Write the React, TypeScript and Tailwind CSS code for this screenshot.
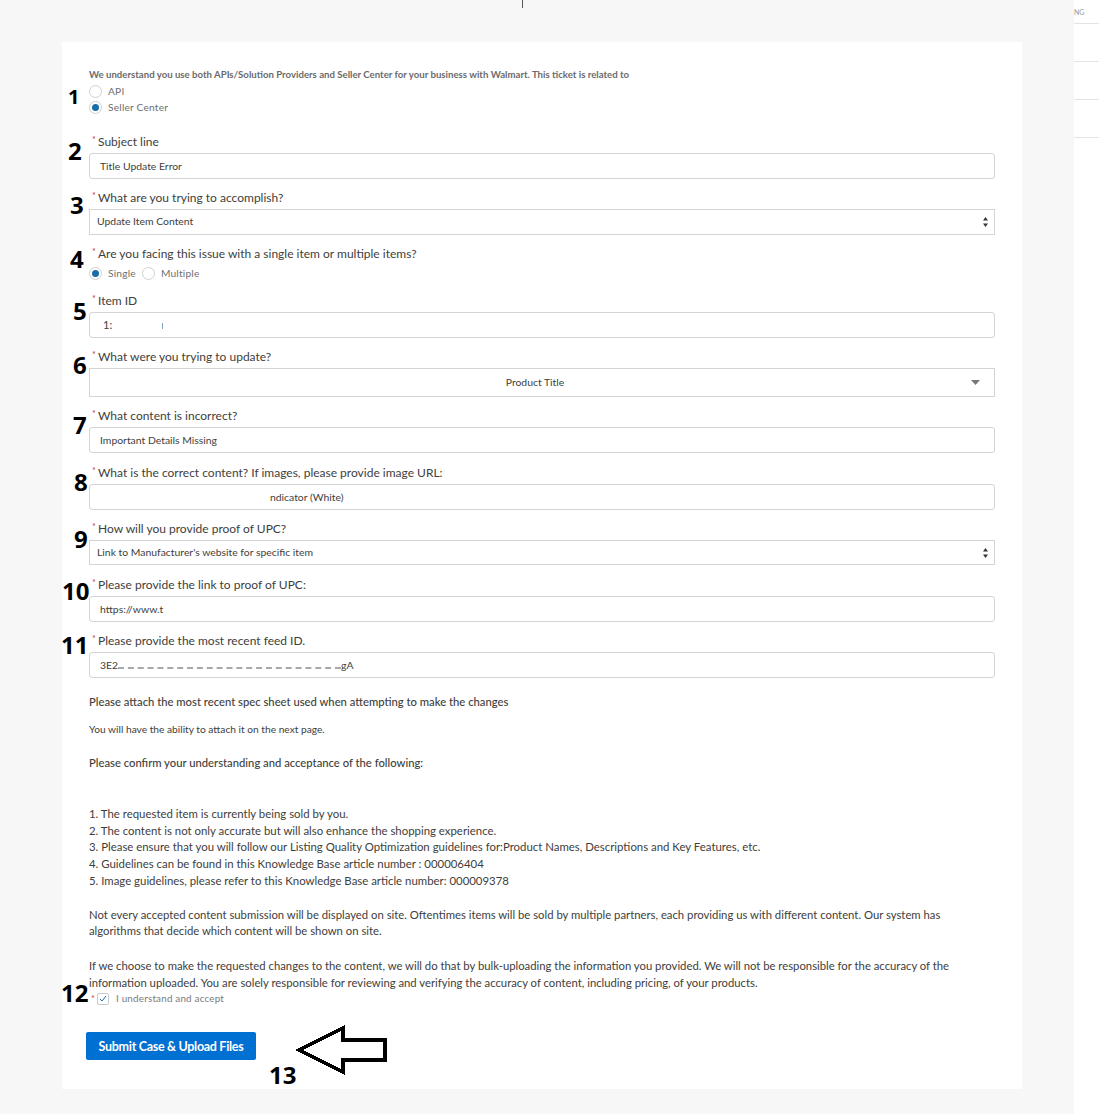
import type { ReactNode } from 'react'

function Label({ children }: { children: ReactNode }) {
  return (
    <div className="h-5 mb-px pl-[3px] flex items-center text-[12px] text-[#3e3e3c]">
      <span className="w-[6px] self-start mt-[2px] text-[9px] leading-[12px] text-[#c23934]">*</span>
      <span>{children}</span>
    </div>
  )
}

function TextBox({ children }: { children: ReactNode }) {
  return (
    <div className="h-[26px] pl-[10px] pt-px flex items-center rounded-[3px] border border-[#d4d4d4] bg-white text-[10.4px] text-[#3e3e3c]">
      {children}
    </div>
  )
}

function SelectBox({ children, className }: { children: ReactNode; className?: string }) {
  return (
    <div className={`h-[26px] pl-[7px] pr-[6px] flex items-center justify-between border border-[#d4d4d4] bg-white text-[10.4px] text-[#3e3e3c] ${className ?? ''}`}>
      <span>{children}</span>
      <svg width="5" height="12" viewBox="0 0 5 12">
        <path d="M2.5 1 L5 4.5 H0 Z" fill="#333" />
        <path d="M2.5 11 L5 7.5 H0 Z" fill="#333" />
      </svg>
    </div>
  )
}

function Radio({ checked, label }: { checked?: boolean; label: string }) {
  return (
    <div className="flex items-center gap-[6px]">
      <span className="w-[13px] h-[13px] rounded-full border border-[#d0d0d0] bg-white flex items-center justify-center">
        {checked && <span className="w-[7px] h-[7px] rounded-full bg-[#1b6ea8]" />}
      </span>
      <span className="text-[10.2px] text-[#6f6f6f] tracking-[0.2px]">{label}</span>
    </div>
  )
}

export default function App() {
  return (
    <div className="flex min-h-[1114px] font-['Lato',sans-serif]">
      <main className="relative w-[1074px] bg-[#f7f7f7] pt-[42px] pb-[25px]">
        <div className="absolute left-[522px] top-0 w-px h-2 bg-[#555]" />

        <div className="relative ml-[62px] w-[960px] bg-white px-[27px] pt-6 pb-[29px]">
          <p className="h-4 leading-4 text-[9.65px] font-bold text-[#6b6b6b]">
            We understand you use both APIs/Solution Providers and Seller Center for your business with Walmart. This ticket is related to
          </p>
          <div className="mt-[2px] flex flex-col">
            <div className="h-4 flex items-center"><Radio label="API" /></div>
            <div className="h-4 flex items-center"><Radio checked label="Seller Center" /></div>
          </div>

          <div className="mt-4 flex flex-col gap-[9px]">
            <div>
              <Label>Subject line</Label>
              <TextBox>Title Update Error</TextBox>
            </div>
            <div>
              <Label>What are you trying to accomplish?</Label>
              <SelectBox>Update Item Content</SelectBox>
            </div>
            <div>
              <Label>Are you facing this issue with a single item or multiple items?</Label>
              <div className="h-[17px] pt-px flex items-center gap-[6px]">
                <Radio checked label="Single" />
                <Radio label="Multiple" />
              </div>
            </div>
            <div>
              <Label>Item ID</Label>
              <TextBox>
                <span className="ml-[3px] w-[59px] text-[11px]">1:</span>
                <span className="w-px h-[6px] bg-[#7f9fc0]" />
              </TextBox>
            </div>
            <div>
              <Label>What were you trying to update?</Label>
              <div className="relative h-[29px] pt-px pr-[14px] flex items-center justify-center border border-[#d4d4d4] bg-white text-[10.4px] text-[#3e3e3c]">
                <span>Product Title</span>
                <svg width="9" height="5" viewBox="0 0 9 5" className="absolute right-[14px] top-[11px]">
                  <path d="M0 0 H9 L4.5 5 Z" fill="#777" />
                </svg>
              </div>
            </div>
            <div>
              <Label>What content is incorrect?</Label>
              <TextBox>Important Details Missing</TextBox>
            </div>
            <div className="mt-px">
              <Label>What is the correct content? If images, please provide image URL:</Label>
              <TextBox><span className="ml-[170px]">ndicator (White)</span></TextBox>
            </div>
            <div>
              <Label>How will you provide proof of UPC?</Label>
              <SelectBox className="!h-[25px]">Link to Manufacturer's website for specific item</SelectBox>
            </div>
            <div className="mt-px">
              <Label>Please provide the link to proof of UPC:</Label>
              <TextBox>https://www.t</TextBox>
            </div>
            <div>
              <Label>Please provide the most recent feed ID.</Label>
              <TextBox>
                <span>3E2</span>
                <span className="w-[223px] mt-[5px] border-b-2 border-dashed border-[#a8a8a8]" />
                <span>gA</span>
              </TextBox>
            </div>
          </div>

          <p className="mt-4 h-4 leading-4 text-[11.25px] font-medium text-[#3e3e3c]">
            Please attach the most recent spec sheet used when attempting to make the changes
          </p>
          <p className="mt-[11px] h-4 leading-4 text-[10.2px] text-[#3e3e3c]">You will have the ability to attach it on the next page.</p>
          <p className="mt-[18px] h-4 leading-4 text-[11.25px] font-medium text-[#3e3e3c]">Please confirm your understanding and acceptance of the following:</p>

          <ol className="mt-[35px] text-[11.4px] leading-[16.7px] text-[#3e3e3c]">
            <li>1. The requested item is currently being sold by you.</li>
            <li>2. The content is not only accurate but will also enhance the shopping experience.</li>
            <li>3. Please ensure that you will follow our Listing Quality Optimization guidelines for:Product Names, Descriptions and Key Features, etc.</li>
            <li>4. Guidelines can be found in this Knowledge Base article number : 000006404</li>
            <li>5. Image guidelines, please refer to this Knowledge Base article number: 000009378</li>
          </ol>

          <p className="mt-[17px] text-[11.3px] leading-[16.5px] text-[#3e3e3c]">
            Not every accepted content submission will be displayed on site. Oftentimes items will be sold by multiple partners, each providing us with different content. Our system has algorithms that decide which content will be shown on site.
          </p>
          <p className="mt-[17px] text-[11.3px] leading-[17px] text-[#3e3e3c]">
            If we choose to make the requested changes to the content, we will do that by bulk-uploading the information you provided. We will not be responsible for the accuracy of the information uploaded. You are solely responsible for reviewing and verifying the accuracy of content, including pricing, of your products.
          </p>

          <div className="h-4 pl-[2px] flex items-center">
            <span className="w-[6px] text-[9px] leading-[12px] text-[#c23934]">*</span>
            <span className="w-3 h-3 rounded-[2px] border border-[#c9c9c9] bg-white flex items-center justify-center">
              <svg width="8" height="7" viewBox="0 0 8 7">
                <path d="M1 4 L3 6 L7 1" fill="none" stroke="#1b6ea8" strokeWidth="1" />
              </svg>
            </span>
            <span className="ml-[7px] text-[9.85px] text-[#7a7a7a] tracking-[0.2px]">I understand and accept</span>
          </div>

          <button className="mt-[25px] -ml-[3px] w-[170px] h-7 pt-[3px] rounded-[2px] bg-[#0070d2] text-[12.5px] font-bold tracking-[-0.3px] text-white">
            Submit Case &amp; Upload Files
          </button>

          {/* numbered annotations drawn over the screenshot */}
          <span className="absolute left-[6px] top-[43px] text-[20px] leading-6 font-bold font-['Open_Sans',sans-serif] text-black">1</span>
          <span className="absolute left-[6px] top-[97px] text-[24px] leading-6 font-bold font-['Open_Sans',sans-serif] text-black">2</span>
          <span className="absolute left-[8px] top-[151px] text-[24px] leading-6 font-bold font-['Open_Sans',sans-serif] text-black">3</span>
          <span className="absolute left-[8px] top-[205px] text-[24px] leading-6 font-bold font-['Open_Sans',sans-serif] text-black">4</span>
          <span className="absolute left-[11px] top-[257px] text-[24px] leading-6 font-bold font-['Open_Sans',sans-serif] text-black">5</span>
          <span className="absolute left-[11px] top-[311px] text-[24px] leading-6 font-bold font-['Open_Sans',sans-serif] text-black">6</span>
          <span className="absolute left-[11px] top-[371px] text-[24px] leading-6 font-bold font-['Open_Sans',sans-serif] text-black">7</span>
          <span className="absolute left-[12px] top-[428px] text-[24px] leading-6 font-bold font-['Open_Sans',sans-serif] text-black">8</span>
          <span className="absolute left-[12px] top-[485px] text-[24px] leading-6 font-bold font-['Open_Sans',sans-serif] text-black">9</span>
          <span className="absolute left-0 top-[537px] text-[24px] leading-6 font-bold font-['Open_Sans',sans-serif] text-black">10</span>
          <span className="absolute -left-px top-[591px] text-[24px] leading-6 font-bold font-['Open_Sans',sans-serif] text-black">11</span>
          <span className="absolute -left-px top-[939px] text-[24px] leading-6 font-bold font-['Open_Sans',sans-serif] text-black">12</span>
          <span className="absolute left-[207px] top-[1021px] text-[24px] leading-6 font-bold font-['Open_Sans',sans-serif] text-black">13</span>
          <svg width="95" height="56" viewBox="0 0 95 56" className="absolute left-[232px] top-[981px]">
            <path d="M5 27 L49 5 V17 H91 V37 H49 V49 Z" fill="none" stroke="#000" strokeWidth="4" shapeRendering="crispEdges" />
          </svg>
        </div>
      </main>

      <aside className="flex-1 bg-white">
        <div className="h-6 border-b border-[#e4e4e4] overflow-hidden text-[7px] leading-[24px] text-[#9a9a9a]">
          <span className="block">NG</span>
        </div>
        <div className="h-[38px] border-b border-[#e4e4e4]" />
        <div className="h-[38px] border-b border-[#e4e4e4]" />
        <div className="h-[38px] border-b border-[#e4e4e4]" />
      </aside>
    </div>
  )
}
